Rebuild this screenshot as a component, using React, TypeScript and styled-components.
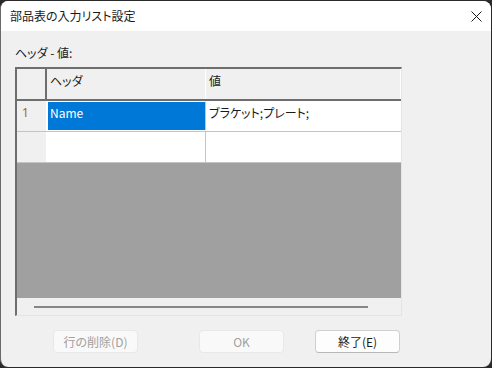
import styled, { createGlobalStyle } from 'styled-components';

const GlobalStyle = createGlobalStyle`
  html, body {
    margin: 0;
    padding: 0;
    background: #2a2a2a;
  }
  body {
    font-family: "Noto Sans CJK JP", "Noto Sans", sans-serif;
    font-size: 12px;
    font-feature-settings: "palt";
  }
`;

const App = () => {
  return (
    <>
      <GlobalStyle />
      <Window>
        <TitleBar>
          <Title>部品表の入力リスト設定</Title>
          <CloseButton>
            <svg width="11" height="11" viewBox="0 0 11 11">
              <path d="M0.5 0.5 L10.5 10.5 M10.5 0.5 L0.5 10.5" stroke="#1a1a1a" strokeWidth="1" />
            </svg>
          </CloseButton>
        </TitleBar>
        <Body>
          <Label>ヘッダ - 値:</Label>
          <Grid>
            <Row $header>
              <Corner />
              <HeadCell>ヘッダ</HeadCell>
              <HeadCell>値</HeadCell>
            </Row>
            <Row>
              <RowHead>1</RowHead>
              <Cell $selected>Name</Cell>
              <Cell $last>ブラケット;プレート;</Cell>
            </Row>
            <Row>
              <RowHead />
              <Cell />
              <Cell $last />
            </Row>
            <Empty />
            <HScroll>
              <Thumb />
            </HScroll>
          </Grid>
          <ButtonRow>
            <Button $offset={38} disabled>
              行の削除(D)
            </Button>
            <Button $offset={61} disabled>
              OK
            </Button>
            <Button $offset={31}>終了(E)</Button>
          </ButtonRow>
        </Body>
      </Window>
    </>
  );
};

export default App;

const Window = styled.div`
  width: 491px;
  height: 366px;
  margin-top: 1px;
  box-sizing: border-box;
  border-radius: 8px;
  overflow: hidden;
  background: #f0f0f0;
  border-left: 1px solid #6a6a6a;
  display: flex;
  flex-direction: column;
`;

const TitleBar = styled.div`
  height: 30px;
  background: #fff;
  display: flex;
  align-items: center;
  justify-content: space-between;
  padding: 0 4px 0 9px;
`;

const Title = styled.div`
  color: #1a1a1a;
  font-size: 12px;
  line-height: 16px;
`;

const CloseButton = styled.div`
  width: 22px;
  height: 22px;
  display: flex;
  align-items: center;
  justify-content: center;
`;

const Body = styled.div`
  flex: 1;
  padding: 14px 0 0 14px;
  display: flex;
  flex-direction: column;
`;

const Label = styled.div`
  color: #1a1a1a;
  line-height: 16px;
  height: 22px;
`;

const Grid = styled.div`
  width: 387px;
  height: 249px;
  box-sizing: border-box;
  border-top: 2px solid #6e6e6e;
  border-left: 2px solid #6e6e6e;
  border-right: 1px solid #e4e4e4;
  border-bottom: 1px solid #e4e4e4;
  display: flex;
  flex-direction: column;
  background: #a0a0a0;
`;

const Row = styled.div<{ $header?: boolean }>`
  display: grid;
  grid-template-columns: 30px 159px 1fr;
  height: ${(p) => (p.$header ? '32px' : '31px')};
  flex-shrink: 0;
  box-sizing: border-box;
  background: #fff;
  border-bottom: ${(p) => (p.$header ? '2px solid #6e6e6e' : '1px solid #c4c4c4')};
`;

const Corner = styled.div`
  background: #f0f0f0;
  border-right: 2px solid #6e6e6e;
`;

const HeadCell = styled.div`
  background: #f0f0f0;
  border-right: 1px solid #fff;
  padding: 4px 0 0 3px;
  line-height: 16px;
  color: #1a1a1a;
`;

const RowHead = styled.div`
  background: #f0f0f0;
  border-right: 1px solid #fff;
  color: #a86800;
  padding: 4px 0 0 5px;
  line-height: 16px;
  font-family: "Noto Sans", sans-serif;
`;

const Cell = styled.div<{ $selected?: boolean; $last?: boolean }>`
  background: ${(p) => (p.$selected ? '#0078d7' : '#fff')};
  color: ${(p) => (p.$selected ? '#fff' : '#1a1a1a')};
  border: ${(p) => (p.$selected ? '1px solid #fff' : 'none')};
  border-right: ${(p) => (p.$last ? '1px solid #fff' : '1px solid #c4c4c4')};
  padding: ${(p) => (p.$selected ? '3px 0 0 2px' : '4px 0 0 3px')};
  line-height: 16px;
`;

const Empty = styled.div`
  flex: 1;
  background: #a0a0a0;
`;

const HScroll = styled.div`
  height: 17px;
  flex-shrink: 0;
  background: #f0f0f0;
  display: flex;
  align-items: center;
  padding-left: 17px;
`;

const Thumb = styled.div`
  width: 334px;
  height: 2px;
  background: #868686;
`;

const ButtonRow = styled.div`
  display: flex;
  margin-top: 14px;
`;

const Button = styled.button<{ $offset: number }>`
  margin-left: ${(p) => p.$offset}px;
  width: 85px;
  height: 23px;
  box-sizing: border-box;
  border-radius: 4px;
  font-family: "Noto Sans CJK JP", "Noto Sans", sans-serif;
  font-size: 12px;
  font-feature-settings: "palt";
  line-height: 16px;
  padding: 0;
  background: ${(p) => (p.disabled ? '#f9f9f9' : '#fdfdfd')};
  color: ${(p) => (p.disabled ? '#a0a0a0' : '#1a1a1a')};
  border: 1px solid ${(p) => (p.disabled ? '#e8e8e8' : '#d0d0d0')};
  border-bottom-color: ${(p) => (p.disabled ? '#e8e8e8' : '#b8b8b8')};
`;
